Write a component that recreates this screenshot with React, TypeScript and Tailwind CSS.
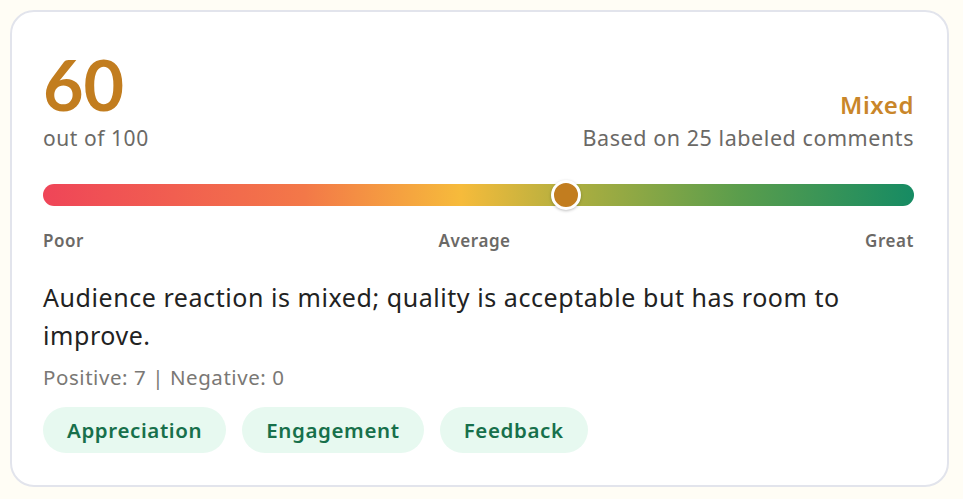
const tags = ['Appreciation', 'Engagement', 'Feedback']

const score = 60

export default function App() {
  return (
    <div className="min-h-screen bg-[#fffdf5] p-[10px] font-['Noto_Sans',sans-serif] tracking-[0.035em]">
      <div className="w-[939px] h-[477px] rounded-[24px] border-2 border-[#e2e4ec] bg-white pl-[31px] pr-[33px] pt-[34px]">
        <div className="flex items-end justify-between">
          <div>
            <div className="font-['Lato',sans-serif] text-[70px] font-bold leading-[76px] tracking-normal text-[#c27d1f]">{score}</div>
            <div className="mt-[2px] text-[21px] leading-[28px] text-[#6b6966]">out of 100</div>
          </div>
          <div className="text-right">
            <div className="mb-[4px] text-[24px] font-semibold leading-[30px] text-[#c9862a]">Mixed</div>
            <div className="text-[21.5px] leading-[28px] text-[#6b6966]">Based on 25 labeled comments</div>
          </div>
        </div>

        <div className="relative mt-[32px] h-[22px] rounded-full bg-[linear-gradient(to_right,#ef4558_0%,#f37848_30%,#f6bb3b_48%,#a8ad40_62%,#5a9d4c_80%,#168b63_100%)]">
          <div
            className="absolute top-1/2 h-[30px] w-[30px] -translate-x-1/2 -translate-y-1/2 rounded-full border-[3px] border-white bg-[#c27d1f] shadow-[0_1px_3px_rgba(0,0,0,0.25)]"
            style={{ left: `${score}%` }}
          />
        </div>

        <div className="mt-[23px] flex justify-between text-[17px] font-semibold leading-[24px] text-[#6b6966]">
          <span>Poor</span>
          <span>Average</span>
          <span>Great</span>
        </div>

        <p className="mt-[25px] text-[25px] leading-[38px] text-[#222222]">
          Audience reaction is mixed; quality is acceptable but has room to improve.
        </p>
        <p className="mt-[9px] text-[20.5px] leading-[28px] text-[#7a7875]">Positive: 7 | Negative: 0</p>

        <div className="mt-[16px] flex gap-4">
          {tags.map(tag => (
            <span
              key={tag}
              className="inline-flex h-[46px] items-center rounded-full bg-[#e7f9f0] px-[24px] text-[20.5px] font-semibold tracking-[0.03em] text-[#17704b]"
            >
              {tag}
            </span>
          ))}
        </div>
      </div>
    </div>
  )
}
